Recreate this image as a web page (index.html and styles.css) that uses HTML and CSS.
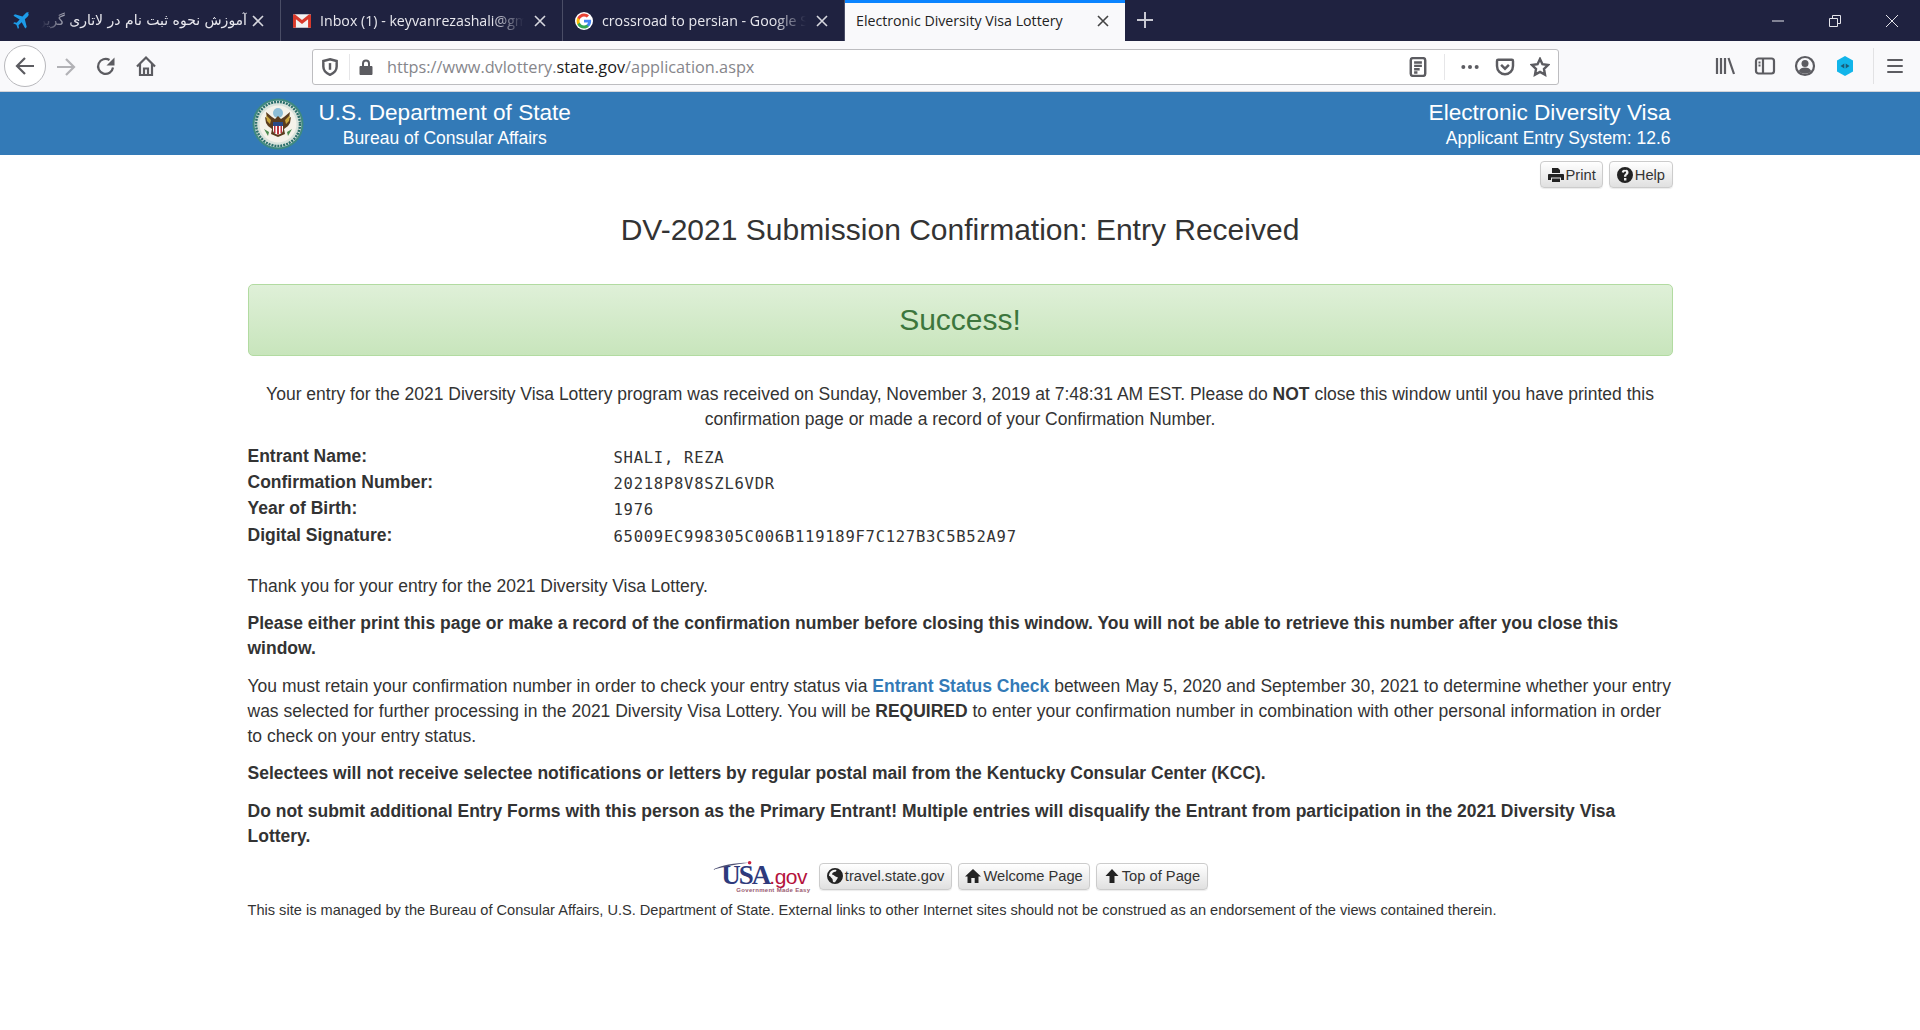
FILE: index.html
```html
<!DOCTYPE html>
<html lang="en">
<head>
    <meta charset="UTF-8">
    <meta name="viewport" content="width=device-width, initial-scale=1.0">
    <title>Electronic Diversity Visa Lottery</title>
    <link rel="stylesheet" href="styles.css">
</head>
<body>
    <!-- browser tabs -->
    <div class="tabbar">
        <div class="tab tab-first">
            <svg class="fav" viewBox="0 0 16 16"><path fill="#1d9be8" d="M15.2.8c-1-.9-2.400-.4-3.300.5L9.300 3.900 2.600 2 1.300 3.300l5.500 3.400-2.700 2.800-2-.4L1 10l2.900 1.400L5.300 15l.9-1-.4-2.200 2.800-2.700 3.200 5.600 1.300-1.300-1.700-6.900 2.600-2.600c.9-.9 1.200-2.200.2-3.100z"/></svg>
            <span class="tab-title tab-rtl" dir="rtl">آموزش نحوه ثبت نام در لاتاری گرین کارت</span>
            <svg class="tab-close" viewBox="0 0 14 14"><path d="M2 2l10 10M12 2L2 12"/></svg>
        </div>
        <div class="tab">
            <svg class="fav" viewBox="0 0 16 16"><rect x="0" y="2" width="16" height="12" rx="1" fill="#f2f2f2"/><path fill="#d8392b" d="M0 3.200C0 2.300.8 2 1.600 2L8 7l6.400-5c.8 0 1.600.3 1.600 1.200V14h-2.600V6.500L8 10.600 2.600 6.500V14H0z"/></svg>
            <span class="tab-title">Inbox (1) - keyvanrezashali@gmail.com</span>
            <svg class="tab-close" viewBox="0 0 14 14"><path d="M2 2l10 10M12 2L2 12"/></svg>
        </div>
        <div class="tab">
            <svg class="fav" viewBox="0 0 48 48"><circle cx="24" cy="24" r="24" fill="#fff"/><path fill="#4285f4" d="M43 24.400c0-1.300-.1-2.500-.3-3.700H24v7.200h10.700c-.5 2.500-1.900 4.500-3.900 5.900v4.900h6.300c3.700-3.400 5.900-8.400 5.900-14.300z"/><path fill="#34a853" d="M24 44c5.300 0 9.700-1.800 13.100-4.800l-6.300-4.900c-1.800 1.200-4.100 1.900-6.800 1.900-5.200 0-9.600-3.500-11.200-8.200H6.300v5C9.600 39.500 16.300 44 24 44z"/><path fill="#fbbc05" d="M12.800 28c-.4-1.200-.6-2.600-.6-4s.2-2.800.6-4v-5H6.300C5 17.700 4.200 20.800 4.200 24s.8 6.300 2.100 9z"/><path fill="#ea4335" d="M24 11.800c2.900 0 5.600 1 7.600 3l5.700-5.700C33.700 5.900 29.300 4 24 4 16.300 4 9.600 8.500 6.300 15l6.500 5c1.600-4.700 6-8.200 11.200-8.200z"/></svg>
            <span class="tab-title">crossroad to persian - Google Search</span>
            <svg class="tab-close" viewBox="0 0 14 14"><path d="M2 2l10 10M12 2L2 12"/></svg>
        </div>
        <div class="tab tab-active">
            <span class="tab-title">Electronic Diversity Visa Lottery</span>
            <svg class="tab-close" viewBox="0 0 14 14"><path d="M2 2l10 10M12 2L2 12"/></svg>
        </div>
        <svg class="tab-new" viewBox="0 0 18 18"><path d="M9 1v16M1 9h16"/></svg>
        <div class="win-controls">
            <svg viewBox="0 0 14 14"><path d="M1 7h12"/></svg>
            <svg viewBox="0 0 14 14"><path d="M1.500 4.500h8v8h-8zM4.500 4.500v-3h8v8h-3"/></svg>
            <svg viewBox="0 0 14 14"><path d="M1 1l12 12M13 1L1 13"/></svg>
        </div>
    </div>

    <!-- browser toolbar -->
    <div class="toolbar">
        <div class="nav-btn nav-back">
            <svg viewBox="0 0 22 22"><path d="M20 11H3M11 3l-8 8 8 8"/></svg>
        </div>
        <svg class="tool tool-fwd" viewBox="0 0 22 22"><path d="M2 11h17M11 3l8 8-8 8"/></svg>
        <svg class="tool tool-reload" viewBox="0 0 22 22"><path d="M18 12.500A7.500 7.500 0 1 1 14.500 5"/><path class="solid" d="M19.500 2.500v8h-8z"/></svg>
        <svg class="tool tool-home" viewBox="0 0 22 22"><path d="M2 11.500l9-9 9 9M5 9v11h12V9M9 20v-6.500h4V20"/></svg>
        <div class="urlbar">
            <svg class="url-icon url-shield" viewBox="0 0 18 18"><path d="M9 2l6 1.600v5c0 3.500-2.500 6-6 7.400-3.500-1.400-6-3.900-6-7.400v-5z"/><path d="M9 5.500v6" stroke-width="3"/></svg>
            <span class="url-sep"></span>
            <svg class="url-lock" viewBox="0 0 16 18"><path d="M4 8V5.500a4 4 0 0 1 8 0V8h1.500c.5 0 1 .5 1 1v7c0 .5-.5 1-1 1h-11c-.5 0-1-.5-1-1V9c0-.5.500-1 1-1zm2 0h4V5.500a2 2 0 0 0-4 0z"/></svg>
            <span class="url-text">https://www.dvlottery.<b>state.gov</b>/application.aspx</span>
            <svg class="url-icon" viewBox="0 0 18 18"><rect x="2.500" y="1" width="13" height="16" rx="2"/><path d="M5.500 5h7M5.500 8h7M5.500 11h5M5.500 14h3" stroke-width="1.200"/></svg>
            <span class="url-sep url-sep-right"></span>
            <svg class="url-icon url-dots" viewBox="0 0 18 18"><circle cx="3" cy="9" r="1.800"/><circle cx="9" cy="9" r="1.800"/><circle cx="15" cy="9" r="1.800"/></svg>
            <svg class="url-icon" viewBox="0 0 18 18"><path d="M2.800 2.500h12.400c.6 0 1 .4 1 1v4.700c0 4-3.200 7.300-7.200 7.300s-7.200-3.300-7.200-7.300V3.500c0-.6.400-1 1-1z"/><path d="M5.500 7L9 10.500 12.500 7"/></svg>
            <svg class="url-icon" viewBox="0 0 18 18"><path d="M9 1.800l2.200 4.700 5 .7-3.600 3.600.9 5.100L9 13.500l-4.500 2.400.9-5.100L1.800 7.200l5-.7z"/></svg>
        </div>
        <div class="tool-right">
            <svg class="tool" viewBox="0 0 22 22"><path d="M3 3v16M7 3v16M11 3v16M14.500 3L20 19"/></svg>
            <svg class="tool" viewBox="0 0 22 22"><rect x="2" y="3.500" width="18" height="15" rx="2.500"/><path d="M9 3.500v15M4.500 7.500h2M4.500 10.500h2"/></svg>
            <svg class="tool" viewBox="0 0 22 22"><circle cx="11" cy="11" r="9"/><circle class="solid" cx="11" cy="8.500" r="3.500"/><path class="solid" d="M4.800 16c1-2.500 3.500-3.500 6.200-3.500s5.200 1 6.200 3.500c-1.500 1.800-3.700 2.800-6.200 2.800s-4.700-1-6.200-2.800z"/></svg>
            <svg class="tool-ext" viewBox="0 0 22 22"><path fill="#12b5ea" d="M11 1l8 4.500v11L11 21l-8-4.500v-11z"/><path fill="#1b5c78" d="M10.300 8.500v5L6.500 11zM11.700 8.500l3.800 2.500-3.800 2.500z"/></svg>
            <span class="tool-sep"></span>
            <svg class="tool tool-menu" viewBox="0 0 22 22"><path d="M2.500 4.500h17M2.500 11h17M2.500 17.500h17" stroke-width="2.400"/></svg>
        </div>
    </div>

    <!-- site header -->
    <header class="site-header">
        <div class="container header-inner">
            <svg class="seal" viewBox="0 0 52 52">
                <circle cx="26" cy="26" r="25.500" fill="#3f8a80"/>
                <circle cx="26" cy="26" r="23.500" fill="#d9e3dc"/>
                <circle cx="26" cy="26" r="22" fill="none" stroke="#2c6f6c" stroke-width="2.500" stroke-dasharray="2 1"/>
                <circle cx="26" cy="26" r="18.500" fill="#f4f2ea"/>
                <circle cx="26" cy="15" r="5" fill="#8cbdd6"/>
                <path fill="#5b3c1e" d="M26 18l3 3 3-2 6-5-1 6 2-1-1 6-2 3-4 3 1 5-7 3-7-3 1-5-4-3-2-3-1-6 2 1-1-6 6 5 3 2z"/>
                <path fill="#c9a63d" d="M14 17l5 5-1 4-3-3zM38 17l-5 5 1 4 3-3z"/>
                <path fill="#fff" d="M21 24h10v8c0 3-3 4-5 5-2-1-5-2-5-5z"/>
                <path fill="#b8323c" d="M22 28h1.500v7H22zM25 28h2v8.500h-2zM28.500 28H30v7h-1.500z"/>
                <path fill="#2a4a86" d="M21 24h10v4H21z"/>
                <path fill="#4a8a4e" d="M12 31l5 3-1 4zM40 31l-5 3 1 4z"/>
            </svg>
            <div class="header-left">
                <div class="dept">U.S. Department of State</div>
                <div class="bureau">Bureau of Consular Affairs</div>
            </div>
            <div class="header-right">
                <div class="dept">Electronic Diversity Visa</div>
                <div class="bureau">Applicant Entry System: 12.6</div>
            </div>
        </div>
    </header>

    <main class="container">
        <div class="top-btns">
            <a class="btn" href="#"><svg class="gly" viewBox="0 0 16 16"><path d="M4 1h6l2 2v3H4zM1 7h14c.5 0 1 .5 1 1v5h-3v-2.500H3V13H0V8c0-.5.500-1 1-1zM4 11.500h8V15H4z"/></svg>Print</a>
            <a class="btn" href="#"><svg class="gly" viewBox="0 0 16 16"><path fill-rule="evenodd" d="M8 0a8 8 0 1 1 0 16A8 8 0 0 1 8 0zM7 11v2.500h2.400V11zM8.200 2.600C6.300 2.600 5 3.600 4.700 5.300l2.200.4c.1-.7.5-1.100 1.200-1.100.6 0 1 .4 1 .9 0 .6-.5 1-1 1.400-.7.600-1.100 1.200-1.100 2v.9h2.300v-.6c0-.5.300-.8.800-1.200.8-.6 1.400-1.300 1.400-2.600 0-1.700-1.300-2.800-3.500-2.800z"/></svg>Help</a>
        </div>

        <h3 class="page-title">DV-2021 Submission Confirmation: Entry Received</h3>

        <div class="alert">Success!</div>

        <p class="intro">Your entry for the 2021 Diversity Visa Lottery program was received on Sunday, November 3, 2019 at 7:48:31 AM EST. Please do <b>NOT</b> close this window until you have printed this confirmation page or made a record of your Confirmation Number.</p>

        <div class="entry-info">
            <span class="label">Entrant Name:</span><span class="value">SHALI, REZA</span>
            <span class="label">Confirmation Number:</span><span class="value">20218P8V8SZL6VDR</span>
            <span class="label">Year of Birth:</span><span class="value">1976</span>
            <span class="label">Digital Signature:</span><span class="value">65009EC998305C006B119189F7C127B3C5B52A97</span>
        </div>

        <p>Thank you for your entry for the 2021 Diversity Visa Lottery.</p>
        <p><b>Please either print this page or make a record of the confirmation number before closing this window. You will not be able to retrieve this number after you close this window.</b></p>
        <p>You must retain your confirmation number in order to check your entry status via <a class="status-link" href="#">Entrant Status Check</a> between May 5, 2020 and September 30, 2021 to determine whether your entry was selected for further processing in the 2021 Diversity Visa Lottery. You will be <b>REQUIRED</b> to enter your confirmation number in combination with other personal information in order to check on your entry status.</p>
        <p><b>Selectees will not receive selectee notifications or letters by regular postal mail from the Kentucky Consular Center (KCC).</b></p>
        <p><b>Do not submit additional Entry Forms with this person as the Primary Entrant! Multiple entries will disqualify the Entrant from participation in the 2021 Diversity Visa Lottery.</b></p>

        <div class="footer-btns">
            <a class="usa-logo" href="#">
                <svg class="usa-swoosh" viewBox="0 0 50 14"><path d="M0 12C12 6 28 3 46 3 30 5 14 8 0 12z"/><circle cx="47" cy="3" r="2.200"/></svg>
                <span class="usa-word">USA</span><span class="usa-gov">.gov</span>
                <span class="usa-tag">Government Made Easy</span>
            </a>
            <a class="btn" href="#"><svg class="gly" viewBox="0 0 16 16"><path d="M8 0a8 8 0 1 1 0 16A8 8 0 0 1 8 0zM5 2.500C3 3.500 2 5.500 2 8c1 0 1.500.5 2 1.500L5.500 11l.5 3c.7.200 1.500.2 2 .2l2-3 1-1.700-2.500-1-2-1.500-1.500-.5.500-1.500L7 4l2-.5.500-1.500C8 1.700 6 1.800 5 2.500z"/></svg>travel.state.gov</a>
            <a class="btn" href="#"><svg class="gly" viewBox="0 0 16 16"><path d="M8 1l8 7.500h-2.500V15H9.700v-5H6.300v5H2.500V8.500H0z"/></svg>Welcome Page</a>
            <a class="btn" href="#"><svg class="gly" viewBox="0 0 16 16"><path d="M8 1l6.500 7H10.500v7h-5V8H1.500z"/></svg>Top of Page</a>
        </div>
        <p class="disclaimer">This site is managed by the Bureau of Consular Affairs, U.S. Department of State. External links to other Internet sites should not be construed as an endorsement of the views contained therein.</p>
    </main>
</body>
</html>
```

FILE: styles.css
```css
* {
    box-sizing: border-box;
}
html, body {
    height: 100%;
    overflow: hidden;
}
body {
    margin: 0;
    background-color: #fff;
    color: #333;
    font-family: "Liberation Sans", Arial, sans-serif;
    font-size: 17.5px;
    line-height: 25px;
}
svg {
    display: block;
    flex: none;
}

/* tabs */
.tabbar {
    display: flex;
    align-items: stretch;
    height: 41px;
    background-color: #1f2240;
}
.tab {
    display: flex;
    align-items: center;
    width: 282px;
    padding: 0 15px 0 12px;
    gap: 9px;
    color: #e8e8ee;
    font-family: "Open Sans", sans-serif;
    font-size: 14.2px;
    border-right: 1px solid #4a4d66;
}
.tab-first {
    width: 281px;
}
.tab-first .tab-close {
    margin-left: -5px;
}
.tab-active {
    width: 280px;
    background-color: #f9f9fb;
    color: #222;
    border-right: none;
    border-top: 3px solid #0a84ff;
    padding: 0 15px 3px 11px;
}
.fav {
    width: 18px;
    height: 18px;
}
.tab-title {
    flex: 1;
    min-width: 0;
    white-space: nowrap;
    overflow: hidden;
    -webkit-mask-image: linear-gradient(to left, transparent, #000 32px);
    mask-image: linear-gradient(to left, transparent, #000 32px);
}
.tab-active .tab-title {
    -webkit-mask-image: none;
    mask-image: none;
}
.tab-rtl {
    font-family: "DejaVu Sans", sans-serif;
    font-size: 14px;
    -webkit-mask-image: linear-gradient(to right, transparent 2px, #000 36px);
    mask-image: linear-gradient(to right, transparent 2px, #000 36px);
}
.tab-close {
    width: 14px;
    height: 14px;
    fill: none;
    stroke: #d6d7de;
    stroke-width: 1.6;
}
.tab-active .tab-close {
    stroke: #444;
}
.tab-new {
    width: 18px;
    height: 18px;
    margin: 11px 0 0 11px;
    fill: none;
    stroke: #c8c9d2;
    stroke-width: 2;
}
.win-controls {
    margin-left: auto;
    display: flex;
    align-items: center;
    gap: 43px;
    padding-right: 21px;
}
.win-controls svg {
    width: 14px;
    height: 14px;
    fill: none;
    stroke: #e4e4ea;
    stroke-width: 1;
}

/* toolbar */
.toolbar {
    display: flex;
    align-items: center;
    height: 51px;
    padding-left: 4px;
    background-color: #f9f9fb;
    border-bottom: 1px solid #d4d4d8;
}
.nav-btn {
    display: flex;
    align-items: center;
    justify-content: center;
    width: 42px;
    height: 42px;
    border: 1px solid #b8b8bc;
    border-radius: 50%;
    background-color: #fff;
}
.toolbar svg path, .toolbar svg rect, .toolbar svg circle {
    fill: none;
    stroke: #5c5c61;
    stroke-width: 2.2;
}
.toolbar svg .solid, .toolbar .url-dots circle, .toolbar .url-lock path {
    fill: #5c5c61;
    stroke: none;
}
.toolbar .tool-ext path {
    fill: revert-layer;
    stroke: none;
}
.nav-btn svg {
    width: 22px;
    height: 22px;
}
.tool {
    width: 22px;
    height: 22px;
}
.tool-fwd {
    margin: 1px 0 0 9px;
}
.toolbar .tool-fwd path {
    stroke: #b2b2b6;
}
.tool-reload {
    margin-left: 18px;
}
.tool-home {
    margin-left: 18px;
}
.urlbar {
    display: flex;
    align-items: center;
    width: 1247px;
    height: 36px;
    margin: 1px 0 0 155px;
    padding: 0 8px 0 7px;
    background-color: #fff;
    border: 1px solid #bdbdc0;
    border-radius: 3px;
}
.url-icon {
    width: 20px;
    height: 20px;
}
.url-sep {
    width: 1px;
    height: 26px;
    margin: 0 8px 0 9px;
    background-color: #e6e6e8;
}
.url-sep-right {
    margin: 0 15px 0 16px;
}
.url-lock {
    width: 16px;
    height: 18px;
    margin-right: 13px;
}
.url-text {
    flex: 1;
    padding-top: 1px;
    color: #86868b;
    font-family: "Open Sans", sans-serif;
    font-size: 16.3px;
}
.url-text b {
    color: #1a1a1a;
    font-weight: 400;
}
.url-dots {
    margin-right: 15px;
}
.url-dots + .url-icon {
    margin-right: 15px;
}
.tool-right {
    display: flex;
    align-items: center;
    flex: 1;
    padding-left: 155px;
    gap: 18px;
}
.tool-ext {
    width: 22px;
    height: 22px;
}
.tool-sep {
    width: 1px;
    height: 36px;
    margin: 0 -7px 0 -1px;
    background-color: #e2e2e4;
}
.tool-menu {
    width: 20px;
    height: 20px;
}

/* site header */
.site-header {
    height: 63px;
    background-color: #337ab7;
    color: #fff;
}
.container {
    width: 1425px;
    margin: 0 auto;
}
.header-inner {
    display: flex;
    align-items: center;
    height: 100%;
    padding: 0 2px 0 4px;
}
.seal {
    width: 52px;
    height: 52px;
}
.header-left {
    margin-left: 15px;
    text-align: center;
}
.header-right {
    margin-left: auto;
    text-align: right;
}
.dept {
    font-size: 22.6px;
    line-height: 29px;
}
.bureau {
    font-size: 17.5px;
    line-height: 22px;
}

/* page body */
.top-btns {
    display: flex;
    justify-content: flex-end;
    gap: 6px;
    height: 33px;
    padding-top: 6px;
}
.btn {
    display: flex;
    align-items: center;
    height: 27px;
    padding: 1px 6.5px 0;
    gap: 2px;
    color: #333;
    font-size: 14.7px;
    text-decoration: none;
    background-image: linear-gradient(to bottom, #fff 0, #e0e0e0 100%);
    border: 1px solid #ccc;
    border-radius: 4px;
    box-shadow: 0 1px 1px rgba(0, 0, 0, 0.08);
}
.gly {
    width: 16px;
    height: 16px;
    margin-top: -1px;
    fill: #222;
}
.page-title {
    margin: 25px 0 38px;
    color: #333;
    font-size: 30px;
    font-weight: 400;
    line-height: 33px;
    text-align: center;
}
.alert {
    height: 72px;
    color: #3c763d;
    font-size: 30px;
    line-height: 70px;
    text-align: center;
    background-image: linear-gradient(to bottom, #dff0d8 0, #c8e5bc 100%);
    border: 1px solid #b2dba1;
    border-radius: 5px;
}
p {
    margin: 0 0 12.5px;
}
.intro {
    margin: 26px 0 12px;
    text-align: center;
}
.entry-info {
    display: grid;
    grid-template-columns: 366px 1fr;
    grid-auto-rows: 26.2px;
    margin-bottom: 25px;
}
.label {
    font-weight: 700;
}
.value {
    padding-top: 2px;
    font-family: "DejaVu Sans Mono", monospace;
    font-size: 15.5px;
    letter-spacing: 0.75px;
}
.status-link {
    color: #337ab7;
    font-weight: 700;
    text-decoration: none;
}
.footer-btns {
    display: flex;
    justify-content: center;
    gap: 6px;
    margin-top: 14px;
    height: 27px;
}
.usa-logo {
    position: relative;
    display: flex;
    align-items: baseline;
    width: 101px;
    height: 30px;
    color: #2e3a7c;
    text-decoration: none;
}
.usa-swoosh {
    position: absolute;
    top: -3px;
    left: 0;
    width: 40px;
    height: 12px;
    fill: #4d4f73;
}
.usa-swoosh circle {
    fill: #c8203f;
}
.usa-word {
    margin-left: 9px;
    font-family: "Liberation Serif", serif;
    font-size: 27px;
    font-weight: 700;
    letter-spacing: -2px;
}
.usa-gov {
    color: #b5123c;
    font-size: 21px;
    letter-spacing: -0.5px;
}
.usa-tag {
    position: absolute;
    left: 24px;
    top: 23px;
    color: #9a5a70;
    font-size: 6px;
    font-weight: 700;
    line-height: 8px;
    letter-spacing: 0.3px;
    white-space: nowrap;
}
.disclaimer {
    margin: 8px 0 0;
    font-size: 14.6px;
    line-height: 25px;
}
```
